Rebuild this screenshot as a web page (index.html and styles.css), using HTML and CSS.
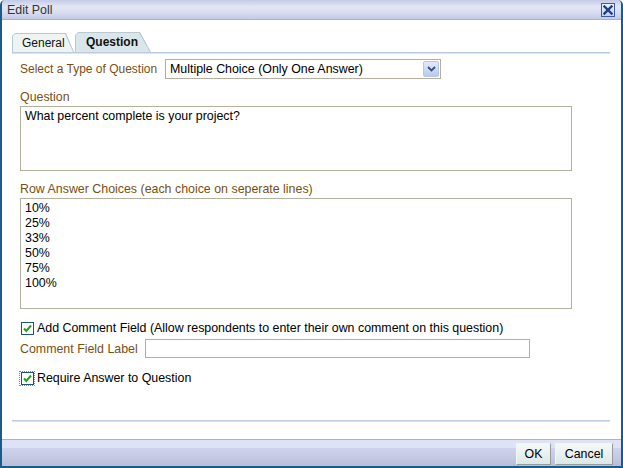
FILE: index.html
```html
<!DOCTYPE html>
<html>
<head>
<meta charset="utf-8">
<link rel="stylesheet" href="styles.css">
</head>
<body>
<div class="dialog">
  <div class="titlebar">
    <span class="title">Edit Poll</span>
    <span class="close"><svg width="10" height="10" viewBox="0 0 10 10"><path d="M1.5 1.5 L8.5 8.5 M8.5 1.5 L1.5 8.5" stroke="#1f3f86" stroke-width="2.4" stroke-linecap="square"/></svg></span>
  </div>
  <div class="body">
    <div class="tabs">
      <div class="tab general"><span>General</span></div>
      <div class="tab active"><span>Question</span></div>
    </div>
    <div class="form">
      <div class="type-row">
        <span class="label">Select a Type of Question</span>
        <div class="select">
          <span class="select-text">Multiple Choice (Only One Answer)</span>
          <span class="arrow"><svg width="9" height="6" viewBox="0 0 9 6"><path d="M1 1 L4.5 4.5 L8 1" fill="none" stroke="#3c4f78" stroke-width="1.8"/></svg></span>
        </div>
      </div>
      <div class="label field-label">Question</div>
      <div class="textarea ta-question">What percent complete is your project?</div>
      <div class="label field-label">Row Answer Choices (each choice on seperate lines)</div>
      <div class="textarea ta-answers">10%<br>25%<br>33%<br>50%<br>75%<br>100%</div>
      <div class="check-row first">
        <span class="checkbox"><svg width="9" height="9" viewBox="0 0 9 9"><path d="M1 4.5 L3.3 7 L8 1.5" fill="none" stroke="#21a321" stroke-width="2"/></svg></span>
        <span class="check-text">Add Comment Field (Allow respondents to enter their own comment on this question)</span>
      </div>
      <div class="comment-row">
        <span class="label">Comment Field Label</span>
        <div class="input"></div>
      </div>
      <div class="check-row second">
        <span class="focus"><span class="checkbox"><svg width="9" height="9" viewBox="0 0 9 9"><path d="M1 4.5 L3.3 7 L8 1.5" fill="none" stroke="#21a321" stroke-width="2"/></svg></span></span>
        <span class="check-text">Require Answer to Question</span>
      </div>
    </div>
    <div class="sep"></div>
  </div>
  <div class="footer">
    <button class="btn ok">OK</button>
    <button class="btn cancel">Cancel</button>
  </div>
</div>
</body>
</html>
```

FILE: styles.css
```css
* { box-sizing: border-box; }
html, body { margin: 0; padding: 0; background: #ffffff; }
body {
  font-family: "Liberation Sans", Arial, sans-serif;
  font-size: 12.4px;
  color: #000;
}
.dialog {
  width: 623px;
  height: 468px;
  border: 2px solid #1b5b8b;
  border-top: none;
  border-radius: 5px 5px 0 0;
  display: flex;
  flex-direction: column;
  background: #fff;
  overflow: hidden;
}
.titlebar {
  height: 20px;
  flex: none;
  display: flex;
  align-items: center;
  justify-content: space-between;
  padding: 0 6px 0 5px;
  background: linear-gradient(#c3cae7, #e3e6f4 35%, #d9ddf0 65%, #c4cae7);
  border-bottom: 1px solid #aab2cc;
}
.title { color: #333; line-height: 19px; padding-top: 2px; }
.close {
  width: 14px;
  height: 14px;
  border: 1px solid #3e5c9c;
  background: linear-gradient(#eef2fc, #c3d0ee);
  display: flex;
  align-items: center;
  justify-content: center;
  margin-top: 1px;
}
.close svg { display: block; }
.body {
  flex: 1;
  padding: 13px 11px 0 10px;
  display: flex;
  flex-direction: column;
}
.tabs {
  display: flex;
  align-items: flex-end;
  border-bottom: 1px solid #bccae4;
  box-shadow: 0 1px 0 #dbe2f1;
  height: 20px;
  font-size: 12px;
}
.tab {
  background: #b9c9d3;
  clip-path: polygon(0 3px, 3px 0, calc(100% - 8px) 0, 100% 100%, 0 100%);
  padding: 1px 0 0 1px;
  height: 19px;
}
.tab span {
  display: block;
  height: 18px;
  line-height: 18px;
  background: #eef4f3;
  clip-path: polygon(0 2px, 2px 0, calc(100% - 9px) 0, calc(100% - 1px) 100%, 0 100%);
  color: #111;
}
.tab.general { width: 62px; }
.tab.general span { padding-left: 9px; }
.tab.active {
  margin-left: 1px;
  height: 20px;
  width: 76px;
  clip-path: polygon(0 3px, 3px 0, calc(100% - 11px) 0, 100% 100%, 0 100%);
}
.tab.active span {
  height: 19px;
  line-height: 19px;
  background: #d9e7ea;
  font-weight: bold;
  padding-left: 10px;
  clip-path: polygon(0 2px, 2px 0, calc(100% - 12px) 0, calc(100% - 1px) 100%, 0 100%);
}
.form {
  padding: 6px 0 0 8px;
  display: flex;
  flex-direction: column;
  align-items: flex-start;
}
.label { color: #7a4f12; line-height: 14px; white-space: nowrap; }
.type-row {
  display: flex;
  align-items: center;
  gap: 8px;
}
.type-row .label { width: 137px; font-size: 12px; }
.select {
  width: 276px;
  height: 20px;
  border: 1px solid #b3b09f;
  display: flex;
  align-items: center;
  justify-content: space-between;
  padding: 0 1px 0 4px;
}
.select-text { line-height: 16px; }
.arrow {
  width: 16px;
  height: 16px;
  border: 1px solid #b8c5e4;
  border-radius: 2px;
  background: linear-gradient(#e3ebfa, #b7c9ef);
  display: flex;
  align-items: center;
  justify-content: center;
}
.arrow svg { display: block; }
.field-label { margin-top: 11px; }
.textarea {
  width: 552px;
  border: 1px solid #b3b09f;
  margin-top: 2px;
  padding: 2px 4px;
  line-height: 15px;
}
.ta-question { height: 65px; }
.ta-answers { height: 111px; }
.check-row {
  display: flex;
  align-items: center;
  height: 14px;
}
.check-row.first { margin-top: 12px; }
.check-row.second { margin-top: 13px; }
.checkbox {
  width: 13px;
  height: 13px;
  border: 1px solid #1c5180;
  background: #fff;
  display: flex;
  align-items: center;
  justify-content: center;
  margin-left: 1px;
}
.checkbox svg { display: block; }
.focus {
  outline: 1px dotted #8a8a8a;
  display: flex;
}
.check-text { margin-left: 3px; line-height: 14px; }
.comment-row {
  display: flex;
  align-items: center;
  gap: 8px;
  margin-top: 4px;
}
.comment-row .label { width: 117px; }
.input {
  width: 385px;
  height: 19px;
  border: 1px solid #b3b09f;
}
.sep {
  margin-top: 35px;
  height: 2px;
  border-top: 1px solid #c0cae4;
  border-bottom: 1px solid #dbe1f0;
}
.footer {
  flex: none;
  height: 27px;
  border-top: 1px solid #a7b4da;
  background: linear-gradient(#dde3f5 0%, #dde3f5 30%, #cdd3ec 30%, #c7cce6 60%, #babdd8 100%);
  display: flex;
  justify-content: flex-end;
  align-items: center;
  gap: 4px;
  padding-right: 8px;
}
.btn {
  font-family: "Liberation Sans", Arial, sans-serif;
  font-size: 12.4px;
  color: #000;
  height: 22px;
  padding: 0;
  border: 1px solid;
  border-color: #f4f6f6 #9a9a9a #9a9a9a #f4f6f6;
  background: linear-gradient(#f6f8f8, #dbe8e8);
  margin-top: 1px;
}
.btn.ok { width: 35px; }
.btn.cancel { width: 58px; }
```
